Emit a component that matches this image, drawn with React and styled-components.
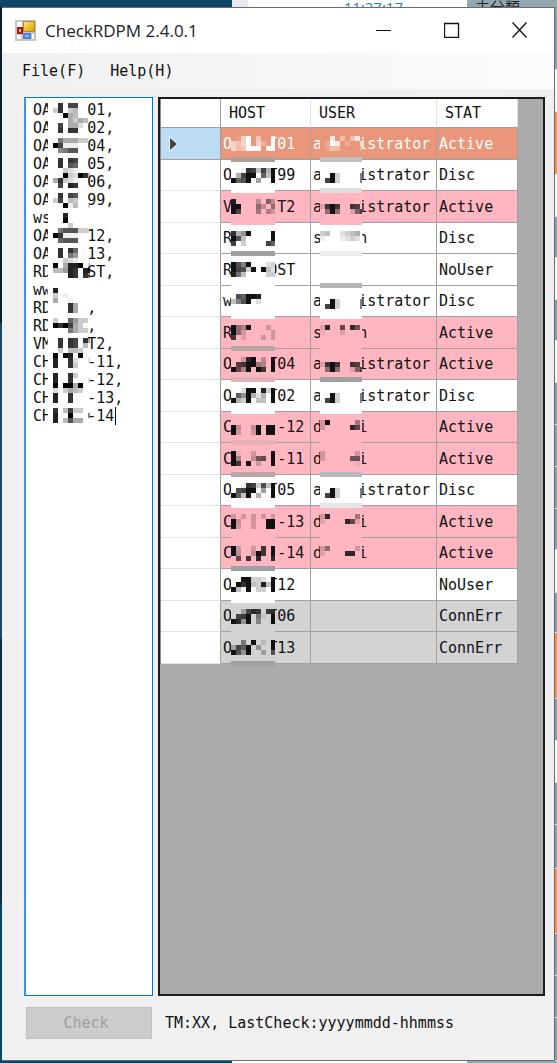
import React from "react";
import styled, { createGlobalStyle } from "styled-components";

const GlobalStyle = createGlobalStyle`
  *, *::before, *::after { box-sizing: border-box; }
  body { margin: 0; background: #fff; }
  button, textarea { font: inherit; margin: 0; }
`;

const mono = `"DejaVu Sans Mono", "Liberation Mono", monospace`;

/* ---------- desktop behind the window ---------- */

const Desktop = styled.div`
  display: grid;
  grid-template-columns: 2px minmax(0, 1fr) 2px;
  grid-template-rows: 7px minmax(0, 1fr) 2px;
  height: 100vh;
  min-height: 760px;
  overflow: hidden;
`;

const Strip = styled.div`
  grid-column: 1 / -1;
  display: flex;
  overflow: hidden;
  background: #fff;
  font: 15px/14px "Open Sans", "Noto Sans CJK JP", sans-serif;
`;

const StripPart = styled.div`
  flex: ${(p) => (p.$grow ? "1 1 0" : `0 0 ${p.$width}px`)};
  background: ${(p) => p.$color};
  color: ${(p) => p.$ink || "#222"};
  text-align: ${(p) => p.$align || "left"};
  padding: 0 8px;
`;

const LeftEdge = styled.div`
  background: linear-gradient(#0b1c2b 0 30%, #17486f 30% 60%, #0e2a42 60% 85%, #0c456b 85%);
`;

const RightEdge = styled.div`
  display: flex;
  flex-direction: column;
  overflow: hidden;
`;

const EdgePart = styled.div`
  flex: ${(p) => p.$size} 0 0;
  background: ${(p) => p.$color};
  border-bottom: 1px solid #dfe5e8;
`;

const slate = "#8a9ea8";
const orange = "#f0944d";
const edgeParts = [
  [63, slate], [42, "#fff"], [64, orange], [42, "#fff"], [41, slate], [42, "#fff"],
  [41, slate], [42, "#fff"], [42, slate], [42, slate], [42, slate], [41, slate],
  [43, "#fff"], [40, slate], [66, orange], [42, slate], [42, "#fff"], [42, slate],
  [44, slate], [66, orange], [42, slate], [42, slate], [43, slate],
];

/* ---------- window chrome ---------- */

const Window = styled.main`
  display: flex;
  flex-direction: column;
  min-width: 0;
  min-height: 0;
  background: #f0f0f0;
  border: solid #6b6b6b;
  border-width: 1px 1px 1px 0;
  font-family: ${mono};
  font-size: 15px;
  line-height: 18px;
  color: #111;
`;

const TitleBar = styled.header`
  display: flex;
  align-items: center;
  flex: 0 0 45px;
  padding-left: 13px;
  background: #fff;
`;

const Title = styled.h1`
  flex: 1;
  margin: 0 0 0 9px;
  font: 400 17px/24px "Open Sans", "Noto Sans", sans-serif;
  color: #222;
  white-space: nowrap;
`;

const CaptionButton = styled.button`
  display: grid;
  place-items: center;
  width: 68px;
  height: 43px;
  margin-bottom: 2px;
  padding: 0;
  border: 0;
  background: none;
`;

const MenuBar = styled.nav`
  display: flex;
  flex: 0 0 36px;
  gap: 7px;
  padding: 0 11px;
  background: linear-gradient(90deg, #f0f0f0, #fcfcfc);
`;

const MenuButton = styled.button`
  padding: 0 9px;
  border: 0;
  background: none;
  color: inherit;
`;

const Body = styled.div`
  flex: 1;
  display: grid;
  grid-template-columns: 129px minmax(0, 1fr);
  grid-template-rows: minmax(0, 1fr) 32px;
  gap: 11px 5px;
  min-height: 0;
  padding: 8px 9px 21px 22px;
`;

const HostBox = styled.div`
  position: relative;
  display: flex;
  min-height: 0;
`;

const HostList = styled.textarea`
  flex: 1;
  width: 100%;
  padding: 3px 0 0 7px;
  border: 1px solid #0078d7;
  border-left: 2px solid #3a96dd;
  border-radius: 0;
  outline: 0;
  resize: none;
  overflow: hidden;
  background: #fff;
  color: #111;
  line-height: 18px;
`;

const HostOverlay = styled.svg`
  position: absolute;
  left: 24px;
  top: 6px;
  pointer-events: none;
`;

const CheckButton = styled.button`
  margin: 0 1px 0 2px;
  padding: 0 6px 0 0;
  border: 1px solid #bfbfbf;
  background: #ccc;
  color: #a0a0a0;
`;

const Status = styled.output`
  align-self: center;
  padding-left: 7px;
  white-space: nowrap;
`;

/* ---------- data grid ---------- */

const GridPane = styled.section`
  min-width: 0;
  overflow: hidden;
  border: 2px solid #1c1c1c;
  background: #ababab;
`;

const Table = styled.table`
  table-layout: fixed;
  width: 358px;
  border-collapse: separate;
  border-spacing: 0;
  border-left: 1px solid #8c8c8c;
`;

const HeadCell = styled.th`
  width: ${(p) => (p.$width ? `${p.$width}px` : "auto")};
  height: 29px;
  padding: 0 0 0 8px;
  border-right: 1px solid ${(p) => (p.$strong ? "#a0a0a0" : "#e3e3e3")};
  border-bottom: 1px solid #a0a0a0;
  background: #fff;
  font-weight: 400;
  text-align: left;
`;

const RowHead = styled.th`
  padding: 0 0 0 7px;
  border-right: 1px solid #a0a0a0;
  border-bottom: 1px solid ${(p) => (p.$selected ? "#a0a0a0" : "#e3e3e3")};
  background: ${(p) => (p.$selected ? "#bcdcf4" : "#fff")};
  text-align: left;

  svg { display: block; }
`;

const Row = styled.tr`
  height: 31px;
  background: ${(p) => p.$fill};
  color: ${(p) => p.$ink};

  &:nth-child(odd) { height: 32px; }
`;

const Cell = styled.td`
  position: relative;
  padding: 0 0 0 2px;
  border-right: 1px solid #a0a0a0;
  border-bottom: 1px solid #a0a0a0;
  white-space: pre;
`;

const CellOverlay = styled.svg`
  position: absolute;
  z-index: 1;
  top: 3px;
  left: ${(p) => p.$left}px;
`;

/* Draws a block mosaic: each hex digit is the strength of one 5px block. */
function Blocks({ rows, ink, top = 0, width }) {
  return rows.flatMap((line, y) =>
    [...line].map((digit, x) => {
      const strength = parseInt(digit, 16);
      if (!strength || x * 5 >= width) return null;
      return (
        <rect key={`${x}-${y}`} x={x * 5} y={top + y * 5} width={Math.min(5, width - x * 5)}
          height="5" fill={ink} fillOpacity={strength / 15} />
      );
    })
  );
}

function CellMask({ left, width, height, fill, ink, rows, band }) {
  const full = band === "line" ? height - 4 : height - 1;
  return (
    <CellOverlay $left={left} width={width} height={full} shapeRendering="crispEdges" aria-hidden="true">
      <rect width={width} height={full} fill={fill} />
      <Blocks rows={rows} ink={ink} top={5} width={width} />
      {band && band !== "line" && <rect y={full - 5} width={width} height="5" fill={band} />}
    </CellOverlay>
  );
}

const kinds = {
  selected: { fill: "#e9967a", ink: "#ffffff" },
  active: { fill: "#ffb6c1", ink: "#111111" },
  plain: { fill: "#ffffff", ink: "#111111" },
  error: { fill: "#d3d3d3", ink: "#111111" },
};

const admin = "a    istrator";
const adminPlain = ["000000000", "00f300008", "0cf300008"];
const adminPink = ["000000000", "2cfc00cb0", "07f70028b"];
const userS = ["340023450", "100012320", "000000000"];
const userC = ["3d0000060", "20000da20", "000000000"];

const records = [
  { kind: "selected", host: "O    T01", hm: ["018f0700f", "869f0840f", "957ffe0ff"], hb: "#ad9d97",
    user: admin, um: ["00c0606c0", "03fc03009", "026500004"], ub: "#c0c0c0", stat: "Active" },
  { kind: "plain", host: "O    T99", hm: ["001dc4c5f", "05cff0a4f", "fabf0600f"],
    user: admin, um: adminPlain, ub: "#dddddd", stat: "Disc" },
  { kind: "active", host: "V     T2", hm: ["e00004084", "ff0007407", "fb0006053"],
    user: admin, um: adminPink, stat: "Active" },
  { kind: "plain", host: "R       ", hm: ["d57f0000f", "fb400000f", "c030000ca"], hb: "#a0a0a0",
    user: "s    h", um: userS, ub: "#ebebeb", stat: "Disc" },
  { kind: "plain", host: "R    OST", hm: ["fb8f00023", "fcb3f0f42", "e94000033"],
    user: "", um: [], ub: "#b4b4b4", stat: "NoUser" },
  { kind: "plain", host: "w       ", hm: ["0baffe000", "48bf02000", "000000000"],
    user: admin, um: adminPlain, stat: "Disc" },
  { kind: "active", host: "R       ", hm: ["f75f00030", "f73000003", "c02000303"], hb: "#b9a6a9",
    user: "s    h", um: ["2d00a0d90", "100020000", "000000000"], stat: "Active" },
  { kind: "active", host: "O    T04", hm: ["003df040f", "0bcff650f", "fa5f0fc0f"], hb: "#dfb2b9",
    user: admin, um: adminPink, ub: "#a0a0a0", stat: "Active" },
  { kind: "plain", host: "O    T02", hm: ["002ff1e3f", "0a7f5250f", "f53f0440f"],
    user: admin, um: adminPlain, stat: "Disc" },
  { kind: "active", host: "C     -12", hm: ["000000000", "f4004f0ff", "f3003f0ff"], hb: "#eab0b9",
    user: "d    i", um: ["3f0000060", "300000da0", "000000000"], stat: "Active" },
  { kind: "active", host: "C     -11", hm: ["f1003000f", "f50049a0f", "fc0f0300f"], hb: "#b9a6a9",
    user: "d    i", um: ["300000030", "300000990", "000000010"], ub: "#b8b8b8", stat: "Active" },
  { kind: "plain", host: "O    T05", hm: ["001dc3b4f", "0bcff060f", "fa4f0500f"],
    user: admin, um: adminPlain, ub: "#e5e5e5", stat: "Disc" },
  { kind: "active", host: "C     -13", hm: ["303030303", "f4003 0ff".replace(" ", "0"), "f3003 0ff".replace(" ", "0")],
    user: "d    i", um: userC, stat: "Active" },
  { kind: "active", host: "C     -14", hm: ["f30030c0f", "f4004fc0f", "0a0c0d00d"], hb: "#a0a0a0",
    user: "d    i", um: ["370000030", "20000dd00", "000000000"], ub: "line", stat: "Active" },
  { kind: "plain", host: "O    T12", hm: ["00ff3320f", "0fdf43e4f", "f41f0330f"],
    user: "", stat: "NoUser" },
  { kind: "error", host: "O    T06", hm: ["004bdc0cd", "0bcf0710f", "fd5f0600f"],
    user: "", stat: "ConnErr" },
  { kind: "error", host: "O    T13", hm: ["0070f020f", "4b9f0500f", "fa5f0040a"], hb: "#a0a0a0",
    user: "", stat: "ConnErr" },
];

const hostText = [
  "OA    01,", "OA    02,", "OA    04,", "OA    05,", "OA    06,", "OA    99,", "ws",
  "OA    12,", "OA    13,", "RD    ST,", "ww", "RD    ,", "RD    ,", "VM    T2,",
  "CH    -11,", "CH    -12,", "CH    -13,", "CH    -14",
].join("\n");

const hostBlocks = (
  "00c0bb000 03c034000 000f54000 000053540 00b055200 00c0cc000 0 008555330 0fb111000 0078aa000 0 " +
  "00c0cb000 00c0a9000 000321000 000f32fc4 05c321003 00b0dc000 0 00c0ba000 03b043000 000f14003 0 " +
  "000d00000 000f00000 000030000 008aaa332 0fc111000 009aaa000 0 00c0c9000 00c086000 000321000 " +
  "0f05ddf03 0446dc0dd 0000dc0c7 0 0 0d0000000 030100000 050010000 0000c5000 0000c5000 0 " +
  "030096330 0fcfb5300 000085330 0 00c0cb0c5 00c0cb040 003044300 0f0fd0f00 0d00c2002 0d00c3000 0 " +
  "0d00c3000 0d00c0002 0f0ff5f00 020354300 0d00c0000 0d00c0000 0 0c04b3300 0d00f0007 0d04a5500"
).split(" ");

function AppIcon() {
  return (
    <svg width="21" height="21" viewBox="0 0 21 21" aria-hidden="true">
      <defs>
        <linearGradient id="gold" x1="0" y1="0" x2="1" y2="1">
          <stop offset="0" stopColor="#ffe27a" /><stop offset="1" stopColor="#dfa000" />
        </linearGradient>
      </defs>
      <rect width="21" height="21" fill="#c4c4c4" />
      <path d="M2 2h5v5H2zM2 15h4v4H2zM17 14h2v5h-2z" fill="#fff" />
      <rect x="8" y="1" width="12" height="11" fill="#b98b10" />
      <rect x="9" y="2" width="10" height="9" fill="url(#gold)" />
      <rect x="2" y="7" width="6" height="7" fill="#a81c18" />
      <rect x="4" y="9" width="2" height="3" fill="#e9a8a0" />
      <rect x="8" y="13" width="8" height="6" fill="#4c80e0" />
      <rect x="10" y="15" width="4" height="2" fill="#8db2f5" />
    </svg>
  );
}

export default function App() {
  return (
    <>
      <GlobalStyle />
      <Desktop>
        <Strip>
          <StripPart $width={232} $color="#0b4669" />
          <StripPart $width={16} $color="#e6eaee" />
          <StripPart $width={163} $color="#fff" $ink="#1787c9" $align="right">11:27:17</StripPart>
          <StripPart $width={56} $color="#fff">
            <svg width="6" height="7" viewBox="0 0 6 7"><path d="M2 1h2v2l2 2v2H0V5l2-2z" fill="#1787c9" /></svg>
          </StripPart>
          <StripPart $grow $color="#93a7b1">未分類</StripPart>
        </Strip>
        <LeftEdge />
        <Window>
          <TitleBar>
            <AppIcon />
            <Title>CheckRDPM 2.4.0.1</Title>
            <CaptionButton aria-label="Minimize">
              <svg width="16" height="16"><path d="M0 8.5h15" stroke="#111" /></svg>
            </CaptionButton>
            <CaptionButton aria-label="Maximize">
              <svg width="16" height="16"><path d="M.5 1.5h14v14H.5z" fill="none" stroke="#111" strokeWidth="1.3" /></svg>
            </CaptionButton>
            <CaptionButton aria-label="Close">
              <svg width="16" height="16"><path d="M.5.5l14 15M14.500.5l-14 15" stroke="#111" strokeWidth="1.3" /></svg>
            </CaptionButton>
          </TitleBar>
          <MenuBar>
            <MenuButton>File(F)</MenuButton>
            <MenuButton>Help(H)</MenuButton>
          </MenuBar>
          <Body>
            <HostBox>
              <HostList aria-label="Hosts" spellCheck="false" defaultValue={hostText} />
              <HostOverlay width="70" height="324" shapeRendering="crispEdges" aria-hidden="true">
                <rect width="40" height="324" fill="#fff" />
                <Blocks rows={hostBlocks} ink="#000" width={42} />
                <rect x="67" y="304" width="1" height="18" fill="#111" />
              </HostOverlay>
            </HostBox>
            <GridPane>
              <Table>
                <thead>
                  <tr>
                    <HeadCell $width={60} $strong aria-label="Row" />
                    <HeadCell $width={90} scope="col">HOST</HeadCell>
                    <HeadCell $width={126} scope="col">USER</HeadCell>
                    <HeadCell scope="col">STAT</HeadCell>
                  </tr>
                </thead>
                <tbody>
                  {records.map((r, i) => {
                    const { fill, ink } = kinds[r.kind];
                    const height = i % 2 ? 31 : 32;
                    return (
                      <Row key={i} $fill={fill} $ink={ink}>
                        <RowHead $selected={i === 0} scope="row">
                          {i === 0 && (
                            <svg width="12" height="16"><path d="M1 0l9 8-9 8z" fill="#f4f4f4" /><path d="M2 2l7 6-7 6z" fill="#444" /></svg>
                          )}
                        </RowHead>
                        <Cell>
                          {r.host}
                          <CellMask left={10} width={44} height={height} fill={fill} ink={ink} rows={r.hm} band={r.hb} />
                        </Cell>
                        <Cell>
                          {r.user}
                          {r.um && (
                            <CellMask left={9} width={42} height={height} fill={fill} ink={ink} rows={r.um} band={r.ub} />
                          )}
                        </Cell>
                        <Cell>{r.stat}</Cell>
                      </Row>
                    );
                  })}
                </tbody>
              </Table>
            </GridPane>
            <CheckButton disabled>Check</CheckButton>
            <Status>TM:XX, LastCheck:yyyymmdd-hhmmss</Status>
          </Body>
        </Window>
        <RightEdge>
          {edgeParts.map(([size, color], i) => (
            <EdgePart key={i} $size={size} $color={color} />
          ))}
        </RightEdge>
        <Strip>
          <StripPart $width={232} $color="#0b4669" />
          <StripPart $width={235} $color="#fff" />
          <StripPart $grow $color="#93a7b1" />
        </Strip>
      </Desktop>
    </>
  );
}
